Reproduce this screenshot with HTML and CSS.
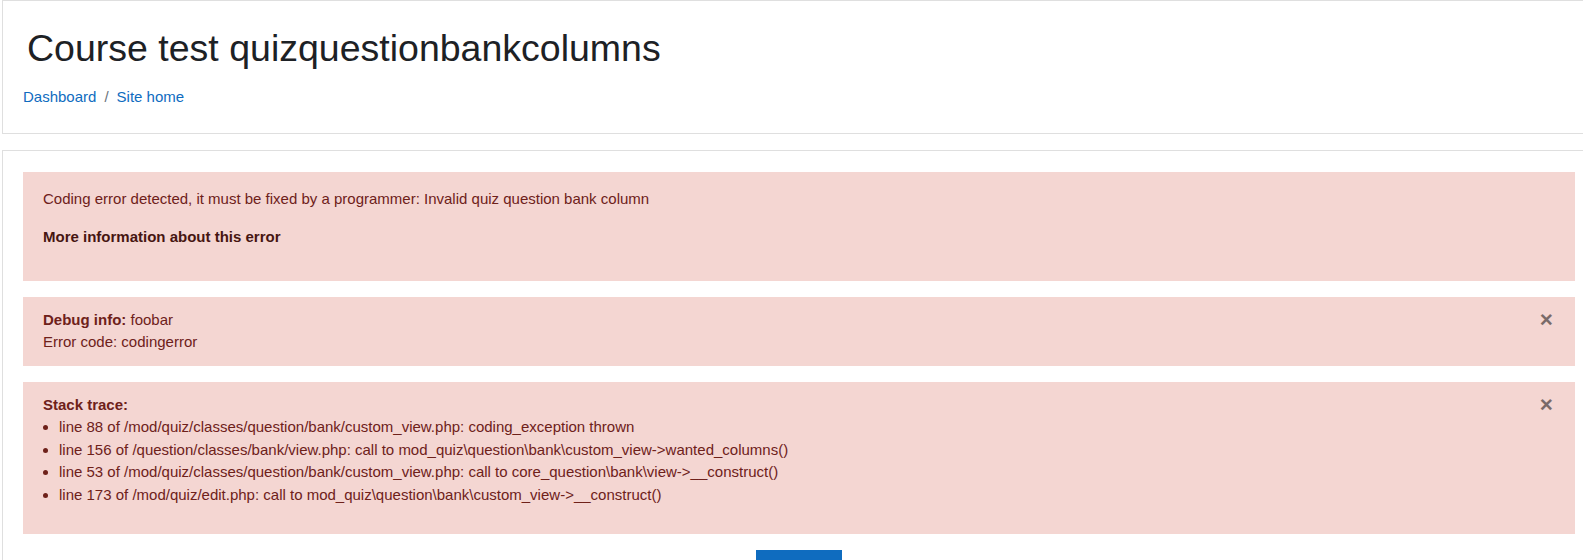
FILE: index.html
```html
<!DOCTYPE html>
<html lang="en">
<head>
<meta charset="utf-8">
<title>Course test quizquestionbankcolumns</title>
<link rel="stylesheet" href="styles.css">
</head>
<body>
<div class="page">
  <header class="card page-header">
    <h1 class="page-title">Course test quizquestionbankcolumns</h1>
    <nav class="breadcrumb">
      <a href="#">Dashboard</a>
      <span class="sep">/</span>
      <a href="#">Site home</a>
    </nav>
  </header>
  <main class="card main">
    <div class="alert alert-error">
      <p class="errormessage">Coding error detected, it must be fixed by a programmer: Invalid quiz question bank column</p>
      <p class="errorcode"><a class="alert-link" href="#">More information about this error</a></p>
    </div>
    <div class="alert alert-dismissible">
      <button class="close" type="button">×</button>
      <div><strong>Debug info:</strong> foobar</div>
      <div>Error code: codingerror</div>
    </div>
    <div class="alert alert-dismissible alert-trace">
      <button class="close" type="button">×</button>
      <div><strong>Stack trace:</strong></div>
      <ul class="backtrace">
        <li>line 88 of /mod/quiz/classes/question/bank/custom_view.php: coding_exception thrown</li>
        <li>line 156 of /question/classes/bank/view.php: call to mod_quiz\question\bank\custom_view-&gt;wanted_columns()</li>
        <li>line 53 of /mod/quiz/classes/question/bank/custom_view.php: call to core_question\bank\view-&gt;__construct()</li>
        <li>line 173 of /mod/quiz/edit.php: call to mod_quiz\question\bank\custom_view-&gt;__construct()</li>
      </ul>
    </div>
    <div class="continuebutton">
      <button class="btn-primary" type="button">Continue</button>
    </div>
  </main>
</div>
</body>
</html>
```
FILE: styles.css
```css
html {
  overflow: hidden;
}
body {
  margin: 0;
  font-family: "Liberation Sans", Arial, sans-serif;
  font-size: 15px;
  line-height: 1.5;
  color: #1d2125;
  background: #fff;
}
.page {
  width: 1594px;
  padding-left: 2px;
}
.card {
  border: 1px solid #dfdfdf;
  background: #fff;
}
.page-header {
  padding: 25px 20px 24px 20px;
  margin-bottom: 16px;
}
.page-title {
  margin: 0 0 15px 0;
  padding-left: 4px;
  font-size: 37.5px;
  font-weight: 400;
  line-height: 1.2;
  color: #1d2125;
}
.breadcrumb {
  display: flex;
  align-items: center;
}
.breadcrumb a {
  color: #0f6cbf;
  text-decoration: none;
}
.breadcrumb .sep {
  color: #6a737b;
  padding: 0 8px;
}
.main {
  padding: 21px 20px 0 20px;
}
.alert {
  position: relative;
  background: #f4d6d2;
  color: #6e211a;
  padding: 12px 20px;
  margin-bottom: 16px;
}
.alert-error {
  padding: 16px 20px;
}
.alert p {
  margin: 0 0 16px 0;
}
.alert-link {
  color: #461511;
  font-weight: 700;
  text-decoration: none;
}
.alert-dismissible {
  padding-right: 60px;
}
.close {
  position: absolute;
  top: 0;
  right: 0;
  padding: 12px 22px 12px 20px;
  border: 0;
  background: transparent;
  font-family: "Liberation Sans", Arial, sans-serif;
  font-size: 22.5px;
  font-weight: 700;
  line-height: 1;
  color: #000;
  opacity: 0.5;
}
.backtrace {
  margin: 0 0 16px 0;
  padding-left: 16px;
}
.continuebutton {
  display: flex;
  justify-content: center;
}
.btn-primary {
  font-family: "Liberation Sans", Arial, sans-serif;
  font-size: 15px;
  line-height: 1.5;
  padding: 6px 12px;
  border: 1px solid #0f6cbf;
  background: #0f6cbf;
  color: #fff;
}
```
